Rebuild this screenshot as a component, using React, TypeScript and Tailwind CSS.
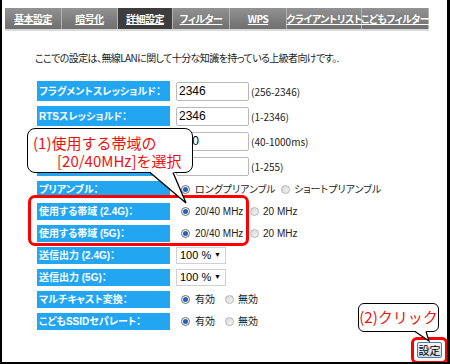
import React from 'react';

const jp = { fontFamily: '"Noto Sans CJK JP", "Noto Sans", sans-serif' };
const mixed = { fontFamily: '"Liberation Sans", "Noto Sans CJK JP", sans-serif' };

const tabs = [
  { label: '基本設定', w: 'w-[57px]' },
  { label: '暗号化', w: 'w-[56px]' },
  { label: '詳細設定', w: 'w-[55px]', active: true },
  { label: 'フィルター', w: 'w-[57px]' },
  { label: 'WPS', w: 'w-[57px]' },
  { label: 'クライアントリスト', w: 'w-[75px]' },
  { label: 'こどもフィルター', w: 'w-[67px]' },
];

const Radio = ({ checked }: { checked?: boolean }) =>
  checked ? (
    <span className="w-[9px] h-[9px] rounded-full border border-[#6b6b6b] bg-white flex items-center justify-center shrink-0">
      <span className="w-[5px] h-[5px] rounded-full bg-[#1f5fc4]" />
    </span>
  ) : (
    <span className="w-[9px] h-[9px] rounded-full border border-[#b5b5b5] bg-gradient-to-br from-[#d8d8d8] to-[#f6f6f6] shrink-0" />
  );

const Label = ({ text, h }: { text: string; h: string }) => (
  <div
    className={`w-[133px] ${h} bg-[#22a6f2] text-white text-[10px] font-bold pl-[2px] flex items-center shrink-0 [font-feature-settings:'palt'] whitespace-nowrap`}
    style={mixed}
  >
    {text}
  </div>
);

const InputRow = ({ label, value, range }: { label: string; value: string; range: string }) => (
  <div className="flex items-center gap-[6px] h-[20px]">
    <Label text={label} h="h-[20px]" />
    <div className="w-[73px] h-[19px] border border-[#b9b9b9] rounded-[2px] bg-white flex items-center pl-[2px] text-[12px] text-black" style={{ fontFamily: '"Liberation Sans", sans-serif' }}>
      {value}
    </div>
    <span className="text-[10px] text-[#222] -ml-[4px] whitespace-nowrap">{range}</span>
  </div>
);

const RadioRow = ({ label, a, b, firstW }: { label: string; a: string; b: string; firstW: string }) => (
  <div className="flex items-center gap-[6px] h-[17px]">
    <Label text={label} h="h-[17px]" />
    <div className="flex items-center text-[10px] leading-[14px] text-[#222] pl-[5px] whitespace-nowrap [font-feature-settings:'palt']" style={mixed}>
      <div className={`flex items-center gap-[5px] shrink-0 ${firstW}`}>
        <Radio checked />
        <span>{a}</span>
      </div>
      <div className="flex items-center gap-[4px]">
        <Radio />
        <span>{b}</span>
      </div>
    </div>
  </div>
);

const SelectRow = ({ label }: { label: string }) => (
  <div className="flex items-center gap-[6px] h-[17px]">
    <Label text={label} h="h-[17px]" />
    <div className="w-[50px] h-[17px] border border-[#d0d0d0] bg-white flex items-center justify-between pl-[3px] pr-[4px] text-[11px] text-black" style={{ fontFamily: '"Liberation Sans", sans-serif' }}>
      <span>100 %</span>
      <span className="text-[7px]">▼</span>
    </div>
  </div>
);

export default function App() {
  return (
    <div className="w-[450px] h-[364px] relative bg-white border-l-2 border-r-[3px] border-b-2 border-black overflow-hidden" style={jp}>
      {/* tabs */}
      <div className="pt-[8px] pl-[3px]">
        <div className="flex w-[424px] h-[21px] bg-gradient-to-b from-[#929292] to-[#6f6f6f]">
          {tabs.map((t) => (
            <div
              key={t.label}
              className={`${t.w} h-full flex items-center justify-center border-r border-[#b4b4b4] text-white text-[10px] font-bold underline tracking-[-0.5px] whitespace-nowrap [font-feature-settings:'palt'] ${t.active ? 'bg-[#3d3d3d]' : ''}`}
            >
              {t.label}
            </div>
          ))}
        </div>
        <div className="w-[424px] h-[2px] bg-[#dadada]" />
      </div>

      <p className="mt-[20px] ml-[33px] text-[10px] leading-[14px] tracking-[-0.6px] text-[#222] [font-feature-settings:'palt']">
        ここでの設定は、無線LANに関して十分な知識を持っている上級者向けです。.
      </p>

      <div className="mt-[16px] ml-[35px] flex flex-col gap-[5px]">
        <InputRow label="フラグメントスレッショルド：" value="2346" range="(256-2346)" />
        <InputRow label="RTSスレッショルド：" value="2346" range="(1-2346)" />
        <InputRow label="ビーコン間隔：" value="100" range="(40-1000ms)" />
        <InputRow label="DTIM期間：" value="1" range="(1-255)" />
        <RadioRow label="プリアンブル：" a="ロングプリアンブル" b="ショートプリアンブル" firstW="w-[100px]" />
        <RadioRow label="使用する帯域 (2.4G)：" a="20/40 MHz" b="20 MHz" firstW="w-[69px]" />
        <RadioRow label="使用する帯域 (5G)：" a="20/40 MHz" b="20 MHz" firstW="w-[69px]" />
        <SelectRow label="送信出力 (2.4G)：" />
        <SelectRow label="送信出力 (5G)：" />
        <RadioRow label="マルチキャスト変換：" a="有効" b="無効" firstW="w-[44px]" />
        <RadioRow label="こどもSSIDセパレート：" a="有効" b="無効" firstW="w-[44px]" />
      </div>

      <div className="flex justify-end mt-[12px] mr-[5px]">
        <button className="w-[25px] h-[16px] border border-[#4f7aa5] rounded-[2px] bg-gradient-to-b from-[#f2f7fb] to-[#cddbe8] text-[11px] leading-none text-black flex items-center justify-center">
          設定
        </button>
      </div>

      {/* highlight 1 */}
      <div className="absolute left-[26px] top-[195px] w-[221px] h-[51px] border-[3px] border-[#ff0000] rounded-[7px]" />

      {/* callout 1 */}
      <div className="absolute left-[25px] top-[128px] w-[166px] h-[45px] bg-white border-[1.5px] border-black rounded-[8px] pl-[5px] pt-[5px] text-[15px] leading-[18px] text-[#ee1010] whitespace-nowrap">
        <div>(1)使用する帯域の</div>
        <div className="pl-[24px]">[20/40MHz]を選択</div>
      </div>
      <svg className="absolute left-[140px] top-[170px]" width="50" height="36" viewBox="0 0 50 36">
        <polygon points="8,2 32,2 44,33" fill="white" />
        <polyline points="8,2.5 44,33 31,2.5" fill="none" stroke="black" strokeWidth="1.3" />
      </svg>

      {/* highlight 2 */}
      <div className="absolute left-[409px] top-[337px] w-[37px] h-[27px] border-[3px] border-[#ff0000] rounded-[6px]" />

      {/* callout 2 */}
      <div className="absolute left-[356px] top-[303px] w-[81px] h-[29px] bg-white border-[1.5px] border-black rounded-[6px] flex items-center justify-center text-[15px] text-[#ee1010] whitespace-nowrap">
        (2)クリック
      </div>
      <svg className="absolute left-[408px] top-[329px]" width="24" height="14" viewBox="0 0 24 14">
        <polygon points="5,2 16,2 19,12" fill="white" />
        <polyline points="5,2.5 19,12 16,2.5" fill="none" stroke="black" strokeWidth="1.2" />
      </svg>
    </div>
  );
}
